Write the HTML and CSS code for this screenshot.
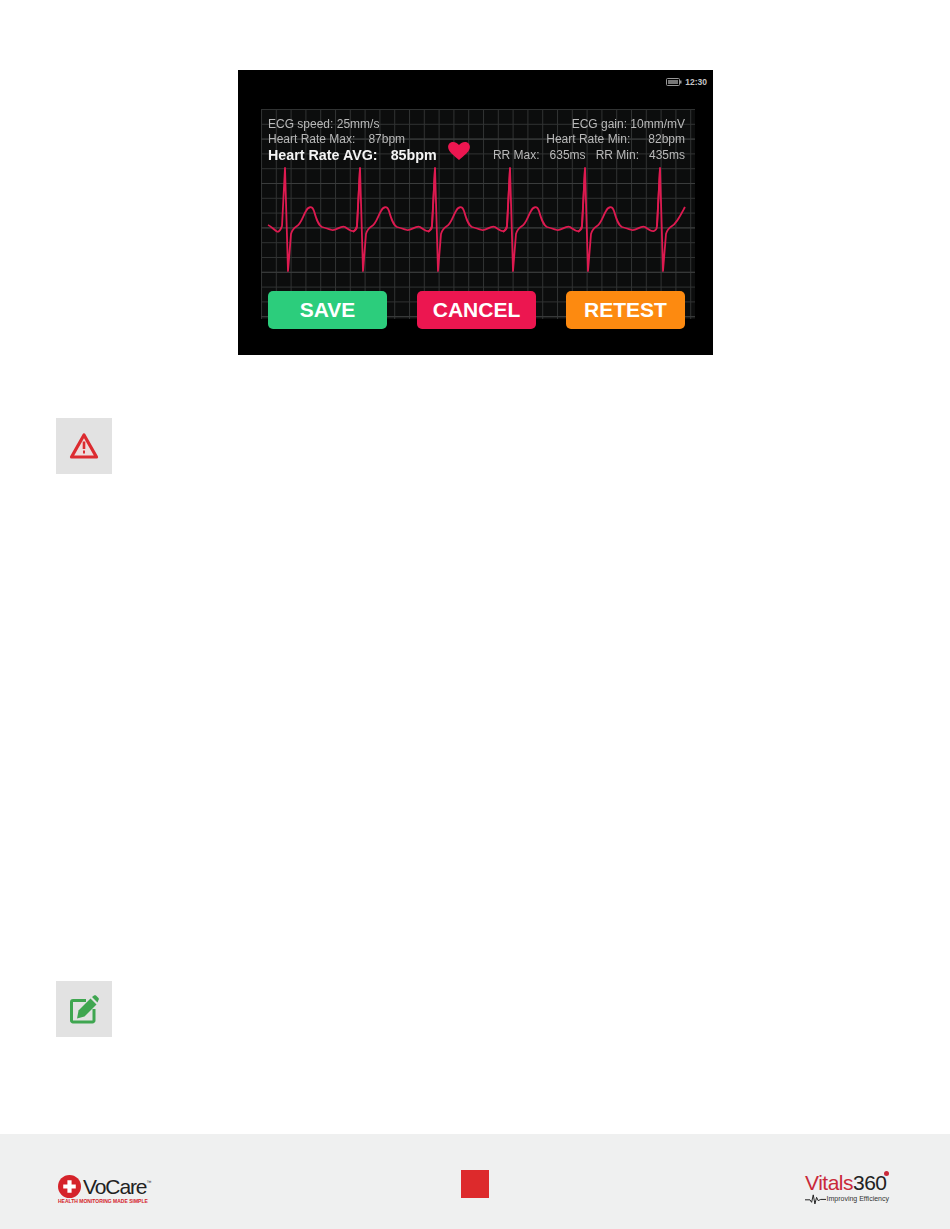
FILE: index.html
```html
<!DOCTYPE html>
<html lang="en">
<head>
  <meta charset="UTF-8">
  <title>ECG results</title>
  <link rel="stylesheet" href="styles.css">
</head>
<body>
  <div class="page">
    <main class="content">
      <!-- device screen -->
      <div class="screen">
        <svg class="grid" width="434" height="210" viewBox="0 0 434 210" aria-hidden="true">
          <defs>
            <pattern id="minor" width="14.800" height="14.800" patternUnits="userSpaceOnUse">
              <path d="M.5 0V14.800M0 .5H14.800" fill="none" stroke="#303232" stroke-width="1"/>
            </pattern>
            <pattern id="major" width="44.400" height="44.400" patternUnits="userSpaceOnUse">
              <path d="M0 30H44.400" fill="none" stroke="#3a3c3c" stroke-width="1"/>
            </pattern>
          </defs>
          <rect width="434" height="210" fill="#0c0d0d"/>
          <rect width="434" height="210" fill="url(#minor)"/>
          <rect width="434" height="210" fill="url(#major)"/>
        </svg>

        <div class="status">
          <svg width="16" height="8" viewBox="0 0 16 8" aria-hidden="true">
            <rect x=".5" y=".5" width="13" height="7" rx="1" fill="none" stroke="#999"/>
            <rect x="2" y="2" width="10" height="4" fill="#777"/>
            <rect x="14" y="2.500" width="1.500" height="3" fill="#999"/>
          </svg>
          <span>12:30</span>
        </div>

        <div class="stats">
          <div class="stats-col">
            <p>ECG speed: 25mm/s</p>
            <p class="gap-row"><span>Heart Rate Max:</span><span>87bpm</span></p>
            <p class="avg"><span>Heart Rate AVG:</span><span>85bpm</span></p>
          </div>
          <svg class="heart" width="24" height="20" viewBox="0 0 26 22" aria-hidden="true">
            <path d="M13 21C8 16 1 12 1 6.500C1 3 3.600 1 6.500 1C9.300 1 11.800 2.400 13 4.500C14.200 2.400 16.700 1 19.500 1C22.400 1 25 3 25 6.500C25 12 18 16 13 21Z" fill="#ec1650"/>
          </svg>
          <div class="stats-col right">
            <p>ECG gain: 10mm/mV</p>
            <p class="gap-row wide"><span>Heart Rate Min:</span><span>82bpm</span></p>
            <p class="gap-row rr"><span>RR Max:</span><span>635ms</span><span>RR Min:</span><span>435ms</span></p>
          </div>
        </div>

        <svg class="trace" width="475" height="110" viewBox="0 165 475 110" aria-hidden="true">
          <defs>
            <path id="beat" d="M40 232C42 231 43 229 44 226L47 168L50 271L53 234C54 230 56 228 59 226C63 224 65 216 68 211C70 207 74 205 76 211C78 218 80 225 84 227C88 228 90 229 94 230C98 231 103 225 107 227C110 229 113 232 116 231C118 230 119 228 119 226L122 168"/>
          </defs>
          <g fill="none" stroke="#dd1a50" stroke-width="1.800" stroke-linejoin="round">
            <path d="M30 225C33 226 37 231 40 232"/>
            <use href="#beat"/>
            <use href="#beat" x="75"/>
            <use href="#beat" x="150"/>
            <use href="#beat" x="225"/>
            <use href="#beat" x="300"/>
            <path d="M419 226L422 168L425 271L428 234C429 230 431 228 434 226C438 224 441 218 447 207"/>
          </g>
        </svg>

        <div class="actions">
          <button class="btn save">SAVE</button>
          <button class="btn cancel">CANCEL</button>
          <button class="btn retest">RETEST</button>
        </div>
      </div>

      <div class="note-icon first">
        <svg width="32" height="30" viewBox="0 0 32 30" aria-hidden="true">
          <path d="M16 4L28.500 26H3.500Z" fill="#eddcdc" stroke="#dc2b30" stroke-width="3.200" stroke-linejoin="round"/>
          <path d="M16 10.500V18" stroke="#dc2b30" stroke-width="2.600"/>
          <path d="M16 19.500V22.500" stroke="#dc2b30" stroke-width="2"/>
        </svg>
      </div>

      <div class="note-icon second">
        <svg width="30" height="30" viewBox="0 0 30 30" aria-hidden="true">
          <path d="M25 15V26.500A1.500 1.500 0 0 1 23.500 28H4A1.500 1.500 0 0 1 2.500 26.500V8A1.500 1.500 0 0 1 4 6.500H17" fill="none" stroke="#3fa650" stroke-width="3"/>
          <path d="M8 24.500L9.500 16.500L21.500 4.500L27.500 10.500L15.500 22.500Z" fill="#3fa650"/>
          <path d="M23 3L25 1.500C25.500 1 26.500 1 27 1.500L29.500 4C30 4.500 30 5.500 29.500 6L28.500 8.500Z" fill="#3fa650"/>
        </svg>
      </div>
    </main>

    <footer class="footer">
      <div class="logo vocare">
        <div class="vocare-top">
          <svg width="23" height="23" viewBox="0 0 22 22" aria-hidden="true">
            <circle cx="11" cy="11" r="11" fill="#d5232a"/>
            <path d="M11 5V17M5 11H17" stroke="#fff" stroke-width="4"/>
          </svg>
          <span class="vocare-name">VoCare<span class="tm">™</span></span>
        </div>
        <div class="vocare-tag">HEALTH MONITORING MADE SIMPLE</div>
      </div>

      <div class="page-mark"></div>

      <div class="logo vitals">
        <div class="vitals-name"><span class="red">Vitals</span><span>36</span><span class="zero">0</span></div>
        <div class="vitals-tag">
          <svg width="23" height="14" viewBox="0 0 26 14" aria-hidden="true">
            <path d="M0 8H6L8 11L10 2L12 13L14 5L16 9L19 7.500H26" fill="none" stroke="#222" stroke-width="1.200"/>
          </svg>
          <span>Improving Efficiency</span>
        </div>
      </div>
    </footer>
  </div>
</body>
</html>
```

FILE: styles.css
```css
* {
  box-sizing: border-box;
}
body {
  margin: 0;
  background-color: #fff;
  font-family: "Liberation Sans", Arial, sans-serif;
}
p {
  margin: 0;
}
.page {
  width: 950px;
  height: 1229px;
  display: flex;
  flex-direction: column;
}
.content {
  flex: 1;
  padding: 70px 56px 0;
}
.screen {
  position: relative;
  width: 475px;
  height: 285px;
  margin-left: 182px;
  padding: 0 28px 0 30px;
  background-color: #000;
  overflow: hidden;
}
.grid {
  position: absolute;
  left: 23px;
  top: 39px;
  filter: blur(0.5px);
}
.status {
  position: relative;
  height: 47px;
  margin-right: -22px;
  padding-top: 7px;
  display: flex;
  justify-content: flex-end;
  align-items: flex-start;
  gap: 3px;
  color: #c4c4c4;
  font-size: 8.500px;
  font-weight: bold;
  line-height: 10px;
}
.status svg {
  margin-top: 1px;
}
.stats {
  position: relative;
  height: 52px;
  display: flex;
  color: #b9b9b9;
  font-size: 12px;
  line-height: 15px;
  filter: blur(0.3px);
}
.stats-col {
  width: 179px;
  white-space: nowrap;
}
.stats-col.right {
  flex: 1;
  width: auto;
  text-align: right;
}
.gap-row {
  display: flex;
  gap: 13px;
}
.gap-row.wide {
  justify-content: flex-end;
  gap: 18px;
}
.gap-row.rr {
  justify-content: flex-end;
  gap: 10px;
  margin-top: 1px;
}
.avg {
  display: flex;
  gap: 13px;
  color: #f4f4f4;
  font-size: 14.300px;
  font-weight: bold;
  margin-top: 1px;
}
.heart {
  margin-top: 24px;
}
.trace {
  position: absolute;
  left: 0;
  top: 95px;
  filter: blur(0.3px);
}
.actions {
  position: absolute;
  left: 30px;
  right: 28px;
  top: 221px;
  display: flex;
  justify-content: space-between;
}
.btn {
  width: 119px;
  height: 38px;
  padding: 0;
  border: none;
  border-radius: 5px;
  color: #fff;
  font-family: inherit;
  font-size: 21px;
  font-weight: bold;
}
.save {
  background-color: #2ccd7c;
}
.cancel {
  background-color: #ec1650;
}
.retest {
  background-color: #fd8a10;
}
.note-icon {
  width: 56px;
  height: 56px;
  display: flex;
  align-items: center;
  justify-content: center;
  background-color: #e2e2e2;
}
.note-icon.first {
  margin-top: 63px;
}
.note-icon.second {
  margin-top: 507px;
}
.footer {
  height: 95px;
  padding: 36px 61px 0 58px;
  display: flex;
  justify-content: space-between;
  align-items: flex-start;
  background-color: #eff0f0;
}
.vocare {
  width: 92px;
  margin-top: 5px;
}
.vocare-top {
  display: flex;
  align-items: center;
  gap: 2px;
}
.vocare-top svg {
  flex-shrink: 0;
}
.vocare-name {
  color: #222;
  font-size: 21px;
  letter-spacing: -1.100px;
  line-height: 22px;
  white-space: nowrap;
}
.tm {
  font-size: 5px;
  line-height: 0;
  letter-spacing: 0;
  vertical-align: 10px;
}
.vocare-tag {
  margin-top: 0;
  color: #d5232a;
  font-size: 5px;
  font-weight: bold;
  line-height: 6px;
  white-space: nowrap;
}
.page-mark {
  width: 28px;
  height: 28px;
  margin-left: -6px;
  background-color: #dd2a2c;
}
.vitals {
  width: 84px;
  margin-top: 4px;
}
.vitals-name {
  height: 18px;
  color: #222;
  font-size: 21px;
  line-height: 18px;
  letter-spacing: -0.5px;
  white-space: nowrap;
}
.vitals-name .red {
  color: #c92a3a;
}
.zero {
  position: relative;
}
.zero::after {
  content: "";
  position: absolute;
  right: -2px;
  top: 0;
  width: 5px;
  height: 5px;
  border-radius: 50%;
  background-color: #c92a3a;
}
.vitals-tag {
  display: flex;
  align-items: center;
  gap: 0;
  color: #333;
  font-size: 7px;
  line-height: 8px;
  white-space: nowrap;
}
```
